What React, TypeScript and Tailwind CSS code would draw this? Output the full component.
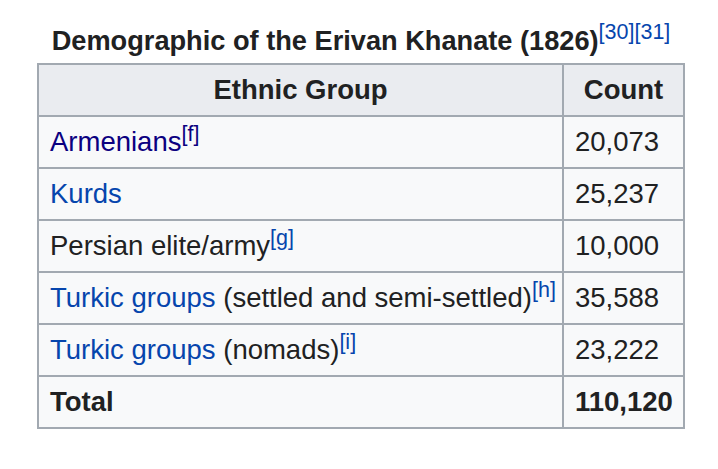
import React from 'react';

type Row = {
  label: React.ReactNode;
  count: string;
};

// preflight already lifts <sup> by half an em
function Ref({ children, visited }: { children: React.ReactNode; visited?: boolean }) {
  return (
    <sup
      className={`text-[21.5px] leading-none font-normal ${
        visited ? 'text-[#0b0080]' : 'text-[#0645ad]'
      }`}
    >
      {children}
    </sup>
  );
}

const rows: Row[] = [
  {
    label: (
      <>
        <span className="text-[#0b0080]">Armenians</span>
        <Ref visited>[f]</Ref>
      </>
    ),
    count: '20,073',
  },
  {
    label: <span className="text-[#0645ad]">Kurds</span>,
    count: '25,237',
  },
  {
    label: (
      <>
        Persian elite/army
        <Ref>[g]</Ref>
      </>
    ),
    count: '10,000',
  },
  {
    label: (
      <>
        <span className="text-[#0645ad]">Turkic groups</span> (settled and semi-settled)
        <Ref>[h]</Ref>
      </>
    ),
    count: '35,588',
  },
  {
    label: (
      <>
        <span className="text-[#0645ad]">Turkic groups</span> (nomads)
        <Ref>[i]</Ref>
      </>
    ),
    count: '23,222',
  },
];

const cell = 'h-[52px] border-2 border-[#a2a9b1] px-[11px] leading-none';

export default function App() {
  return (
    <div
      className="min-h-[469px] w-[718px] bg-white pt-[21px] pl-[37px] text-[#202122]"
      style={{ fontFamily: '"Liberation Sans", Arial, sans-serif' }}
    >
      <table className="w-[648px] table-fixed border-collapse border-2 border-[#a2a9b1] bg-[#f8f9fa] text-[27.5px]">
        <caption className="bg-white pb-[2px] text-center text-[27.2px] font-bold leading-[40px]">
          Demographic of the Erivan Khanate (1826)
          <Ref>[30][31]</Ref>
        </caption>
        <colgroup>
          <col className="w-[525px]" />
          <col />
        </colgroup>
        <thead>
          <tr>
            <th className={`${cell} bg-[#eaecf0] text-center font-bold`}>Ethnic Group</th>
            <th className={`${cell} bg-[#eaecf0] text-center font-bold`}>Count</th>
          </tr>
        </thead>
        <tbody>
          {rows.map((row, i) => (
            <tr key={i}>
              <td className={`${cell} whitespace-nowrap`}>{row.label}</td>
              <td className={cell}>{row.count}</td>
            </tr>
          ))}
          <tr>
            <td className={`${cell} font-bold`}>Total</td>
            <td className={`${cell} font-bold`}>110,120</td>
          </tr>
        </tbody>
      </table>
    </div>
  );
}
